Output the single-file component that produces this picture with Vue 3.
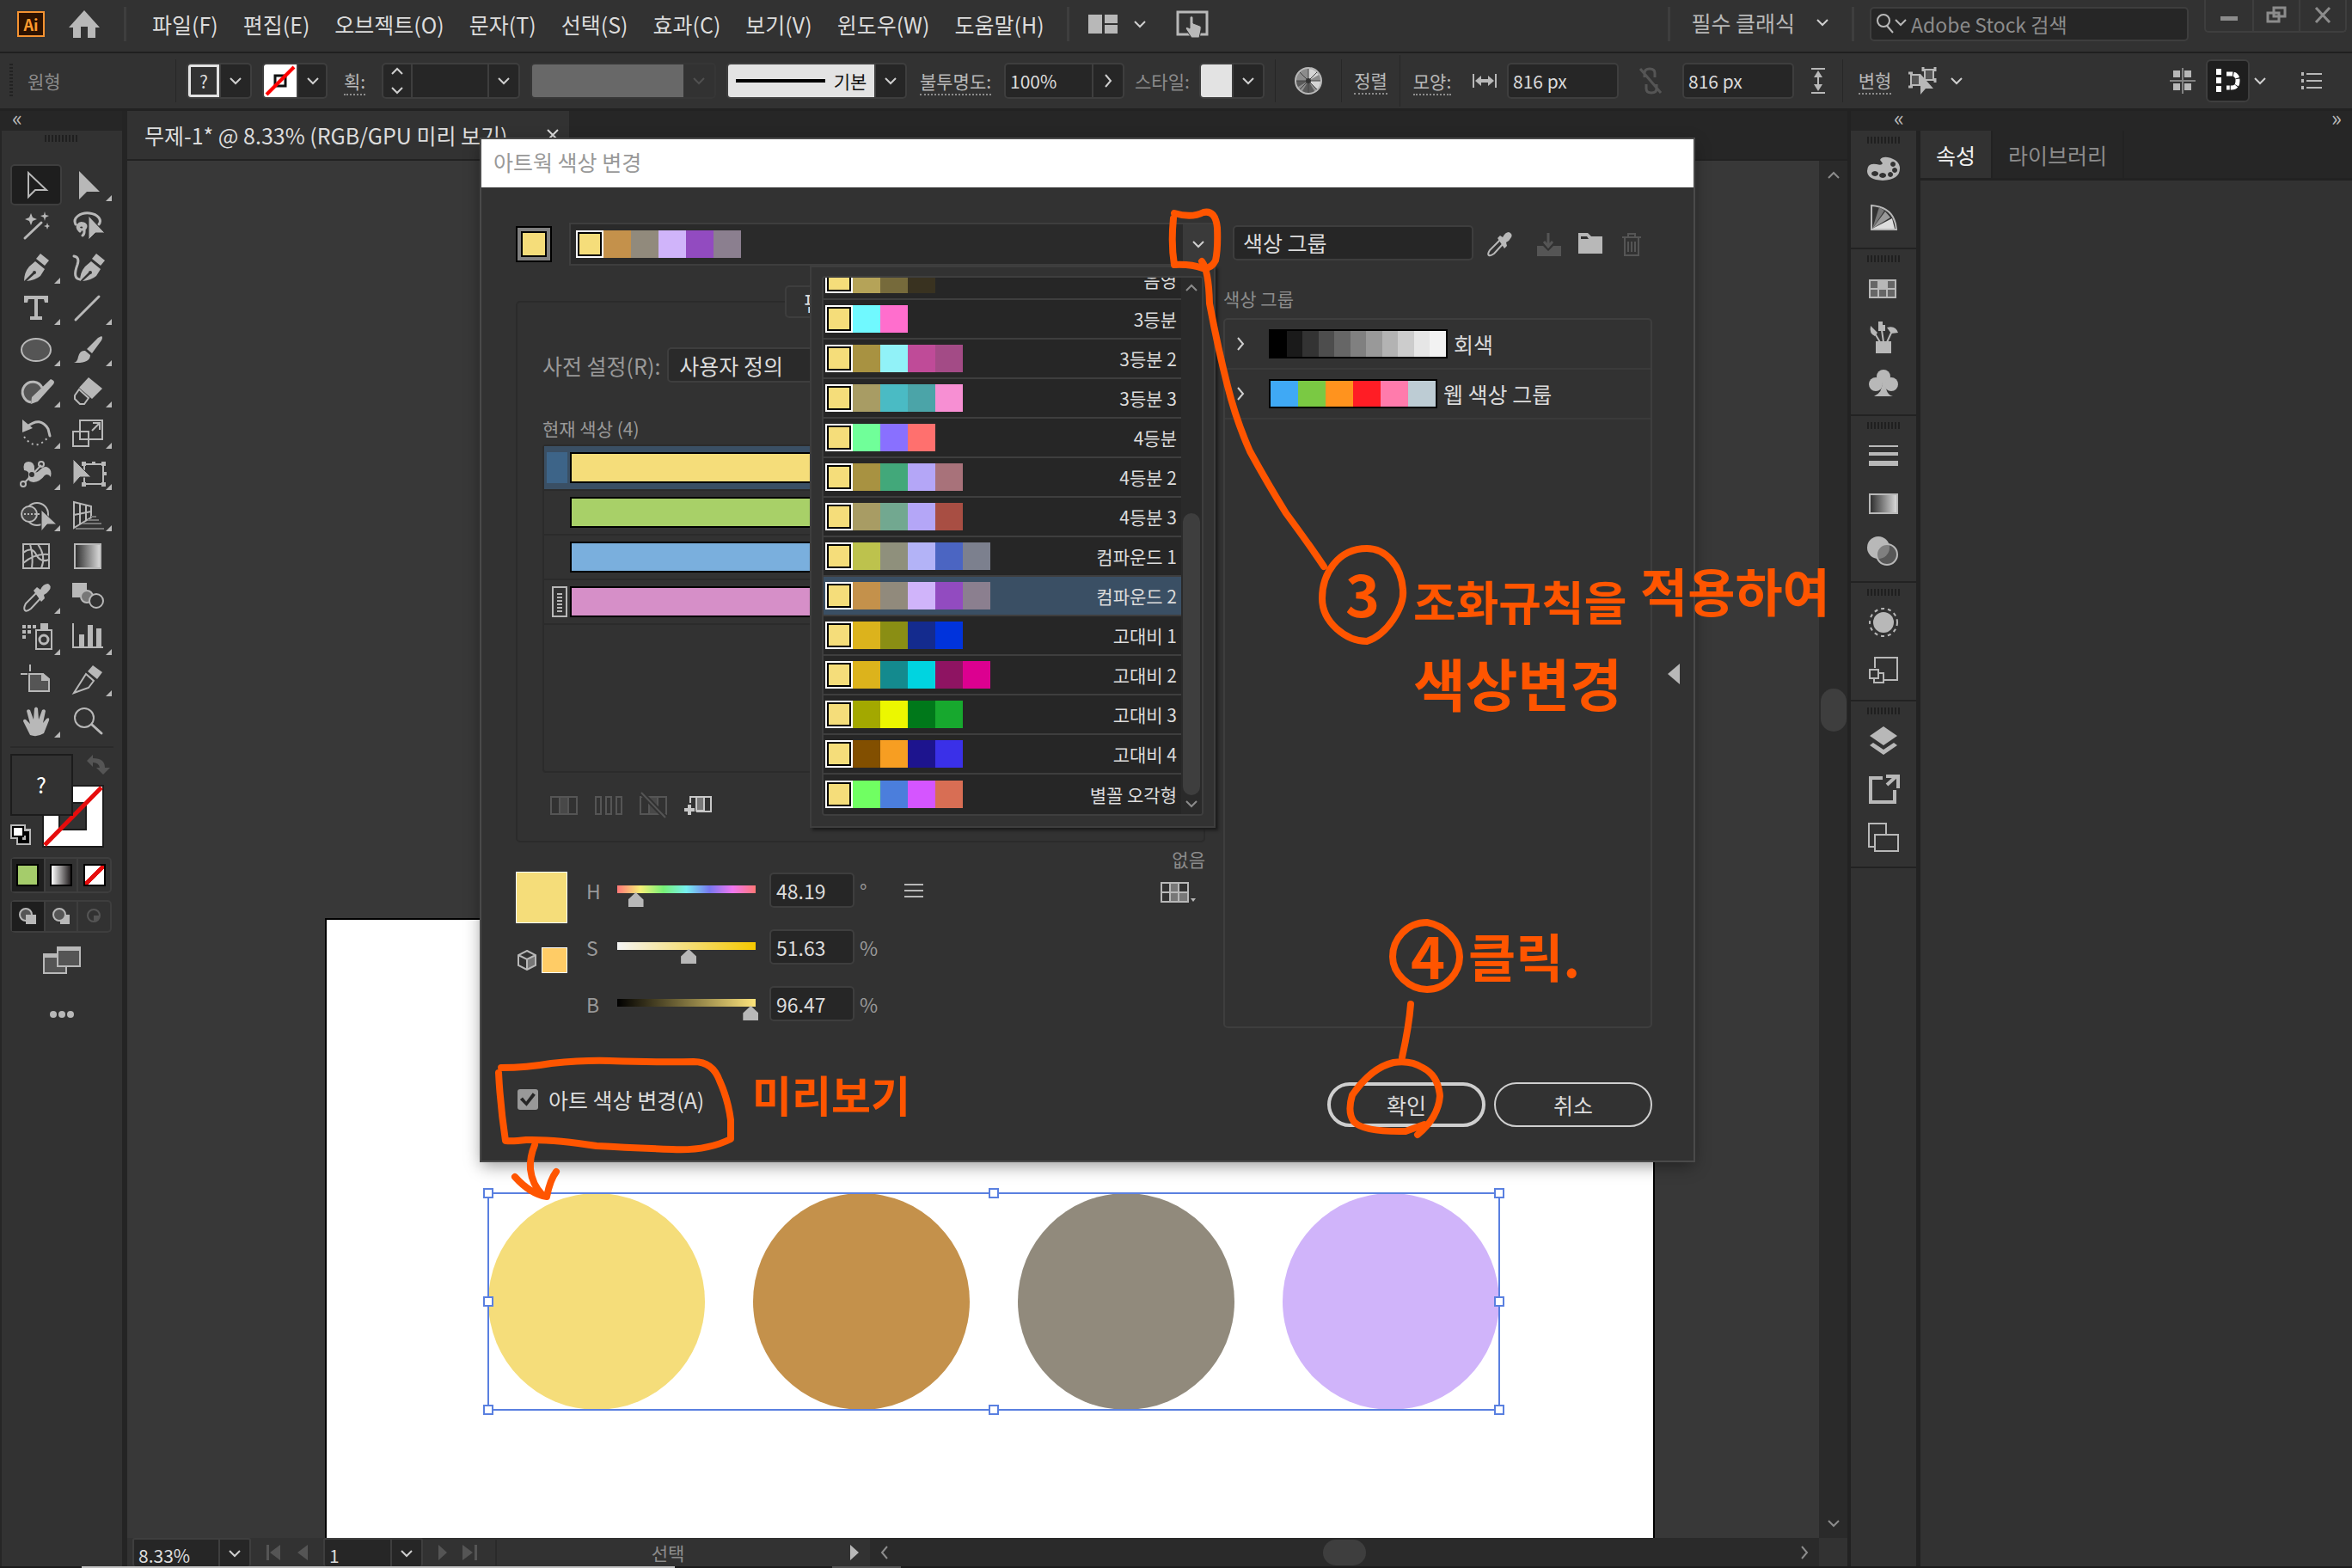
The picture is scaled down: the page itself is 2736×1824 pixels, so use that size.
<template>
  <div class="app">
    <!-- Menu bar -->
    <header class="menubar">
      <span class="logo">Ai</span>
      <button class="home" aria-label="Home">
        <svg viewBox="0 0 36 32"><path d="M18 0 36 20h-5v12h-9V19h-8v13H5V20H0z" /></svg>
      </button>
      <span class="vline"></span>
      <nav class="menus">
        <button v-for="m in menus" :key="m">{{ m }}</button>
      </nav>
      <span class="vline"></span>
      <button class="arrange" aria-label="Arrange">
        <svg viewBox="0 0 34 22" width="34" height="22"><path d="M0 0h16v22H0zM19 0h15v10H19zM19 12h15v10H19z" /></svg>
        <Chevron dir="down" />
      </button>
      <button class="touch" aria-label="Touch">
        <svg viewBox="0 0 38 32" width="38" height="32">
          <path d="M2 2h34v26H2z" fill="none" stroke="currentColor" stroke-width="3" />
          <path d="M16 8q2-3 4 0v7l8 3q2 1 1 5l-2 9h-9l-7-11q1-3 5 0z" stroke="#323232" stroke-width="1" />
        </svg>
      </button>
      <div class="menubar-right">
        <span class="vline"></span>
        <button class="workspace">필수 클래식 <Chevron dir="down" /></button>
        <span class="vline"></span>
        <label class="stock">
          <svg viewBox="0 0 40 28" width="40" height="28" fill="none" stroke="currentColor" stroke-width="2">
            <circle cx="10" cy="10" r="7" /><path d="m14 16 7 8M24 9l6 6 6-6" />
          </svg>
          <input type="text" placeholder="Adobe Stock 검색">
        </label>
        <div class="winbtns">
          <button aria-label="Minimize"><svg viewBox="0 0 24 24"><path d="M2 13h20v5H2z" /></svg></button>
          <button aria-label="Restore">
            <svg viewBox="0 0 24 24" fill="none" stroke="currentColor" stroke-width="3"><path d="M9 3h13v10H9zM2 9h13v10H2z" /></svg>
          </button>
          <button aria-label="Close">
            <svg viewBox="0 0 24 24" fill="none" stroke="currentColor" stroke-width="3"><path d="m4 3 16 17M20 3 4 20" /></svg>
          </button>
        </div>
      </div>
    </header>

    <!-- Control bar -->
    <div class="controlbar">
      <span class="grip-v"></span>
      <span class="objtype">원형</span>
      <span class="vsep"></span>
      <div class="combo w76">
        <button class="fillq">?</button>
        <button class="arr" aria-label="Fill"><Chevron dir="down" /></button>
      </div>
      <div class="combo w76">
        <button class="strokenone" aria-label="None">
          <svg viewBox="0 0 38 38"><path d="M0 0h38v38H0z" fill="#fff" /><path d="M13 13h12v12H13z" fill="#fff" stroke="#111" stroke-width="3" /><path d="M3 35 35 3" stroke="#f00" stroke-width="4" /></svg>
        </button>
        <button class="arr" aria-label="Stroke"><Chevron dir="down" /></button>
      </div>
      <label class="clabel w39" for="strokeWeight"><u>획:</u></label>
      <div class="combo w161">
        <span class="spin"><Chevron dir="up" /><Chevron dir="down" /></span>
        <input id="strokeWeight" type="text">
        <button class="arr" aria-label="Stroke weight"><Chevron dir="down" /></button>
      </div>
      <div class="combo w216 off">
        <span class="greyfill"></span>
        <button class="arr" aria-label="Profile" disabled><Chevron dir="down" /></button>
      </div>
      <div class="combo w210">
        <button class="brush"><span class="brushline"></span>기본</button>
        <button class="arr" aria-label="Brush"><Chevron dir="down" /></button>
      </div>
      <label class="clabel w89" for="opacity"><u>불투명도:</u></label>
      <div class="combo w140">
        <input id="opacity" type="text" value="100%">
        <button class="arr" aria-label="Opacity"><Chevron dir="right" /></button>
      </div>
      <span class="clabel w63 dim">스타일:</span>
      <div class="combo w76">
        <span class="whitefill"></span>
        <button class="arr" aria-label="Style"><Chevron dir="down" /></button>
      </div>
      <span class="vsep"></span>
      <button class="cicon w52" aria-label="Recolor">
        <svg viewBox="0 0 34 34" width="34" height="34">
          <circle cx="17" cy="17" r="15" fill="#8c8c8c" stroke="#b8b8b8" stroke-width="2" />
          <path d="M17 17 17 3A14 14 0 0 1 29 10zM17 17 31 17A14 14 0 0 1 27 27z" fill="#d5d5d5" />
          <path d="M17 17 24 29A14 14 0 0 1 10 29zM17 17 5 24A14 14 0 0 1 3 17z" fill="#5a5a5a" />
          <path d="M17 3v28M3 17h28M7 7l20 20M27 7 7 27" stroke="#444" />
          <circle cx="17" cy="17" r="3" fill="#323232" />
        </svg>
      </button>
      <span class="vsep"></span>
      <button class="clabel w43"><u>정렬</u></button>
      <span class="vsep tall"></span>
      <span class="clabel w50"><u>모양:</u></span>
      <span class="cicon w38 end">
        <svg viewBox="0 0 28 16" width="28" height="16"><path d="M0 0h2v16H0zM26 0h2v16h-2zM3 8l7-6v4h8V2l7 6-7 6v-4h-8v4z" /></svg>
      </span>
      <div class="combo w130"><input type="text" value="816 px" aria-label="Width"></div>
      <span class="cicon w50 faint">
        <svg viewBox="0 0 28 32" width="28" height="32" fill="none" stroke="currentColor" stroke-width="3">
          <path d="M7 12V7q0-5 6-5t6 5v5M9 20v5q0 5 6 5t6-5v-5M2 2l24 28" />
        </svg>
      </span>
      <div class="combo w130"><input type="text" value="816 px" aria-label="Height"></div>
      <span class="cicon w32">
        <svg viewBox="0 0 16 30" width="16" height="30"><path d="M0 0h16v2H0zM0 28h16v2H0zM8 3l5 8H9v8h4l-5 8-5-8h4v-8H3z" /></svg>
      </span>
      <span class="vsep"></span>
      <button class="clabel w50"><u>변형</u></button>
      <button class="cicon w38" aria-label="Isolate">
        <svg viewBox="0 0 34 34" width="34" height="34">
          <path d="M3 10h10v12H3zM19 4h10v12H19z" fill="#555" stroke="currentColor" stroke-width="2" />
          <path d="M0 8h5M0 24h5M17 1v5M31 1v5M31 14v5" stroke="currentColor" stroke-width="3" />
          <path d="M14 9v24l6-7h9z" />
        </svg>
      </button>
      <Chevron dir="down" />
      <div class="controlbar-right">
        <button class="cicon" aria-label="Align grid">
          <svg viewBox="0 0 30 30" width="30" height="30"><path d="M4 3h8v8H4zM17 3h8v8h-8zM4 18h8v8H4zM17 18h8v8h-8z" /><path d="M14 0h2v30h-2zM0 14h30v2H0z" opacity=".6" /></svg>
        </button>
        <button class="cicon snap" aria-label="Snap">
          <svg viewBox="0 0 30 30" width="30" height="30" fill="none" stroke="#fff">
            <path d="M4 1v28" stroke-width="6" stroke-dasharray="7 3" /><path d="M13 7h6q7 0 7 8t-7 8h-6" stroke-width="5" stroke-dasharray="7 1" />
          </svg>
        </button>
        <Chevron dir="down" />
        <button class="cicon list" aria-label="Options">
          <svg viewBox="0 0 24 20" width="24" height="20"><path d="M0 0h3v4H0zM0 8h3v4H0zM0 16h3v4H0zM6 1h18v2H6zM6 9h18v2H6zM6 17h18v2H6z" /></svg>
        </button>
      </div>
    </div>

    <div class="body">
      <!-- Tools -->
      <aside class="toolbar">
        <div class="dockhead">«</div>
        <span class="grip"></span>
        <div class="tools">
          <button v-for="(t, i) in tools" :key="t.name" class="tool" :class="{ active: i === 0 }" :aria-label="t.name">
            <svg viewBox="0 0 36 36" width="36" height="36" v-html="t.svg"></svg>
            <i v-if="t.more" class="corner"></i>
          </button>
        </div>
        <div class="paint">
          <svg viewBox="0 0 120 112" width="120" height="112">
            <path d="M38 37h70v71H38z" fill="#fff" stroke="#1c1c1c" stroke-width="2" />
            <path d="M57 57h31v31H57z" fill="#323232" stroke="#1c1c1c" stroke-width="2" />
            <path d="M40 106 106 39" stroke="#e60c0c" stroke-width="5" />
            <path d="M1 1h71v70H1z" fill="#323232" stroke="#1c1c1c" stroke-width="2" />
            <path d="m89 8 7-7v4q14 0 14 11h6l-8 8-8-8h4q-1-6-8-6v5z" fill="#555" />
            <path d="M0 82h18v5h6v19H7v-7H0z" fill="#b8b8b8" />
            <path d="M2 84h14v13H2zM9 90h13v14H9z" />
            <path d="M9 90h13v14H9z" fill="#000" />
            <path d="M14 95h4v5h-4z" fill="#b8b8b8" />
            <path d="M3 85h12v11H3z" fill="#fff" stroke="#000" stroke-width="2" />
          </svg>
          <span class="paintq">?</span>
        </div>
        <div class="trio">
          <button class="on" aria-label="Color"><span class="sw green"></span></button>
          <button aria-label="Gradient"><span class="sw grad"></span></button>
          <button aria-label="None"><span class="sw none"></span></button>
        </div>
        <div class="trio modes">
          <button class="on" aria-label="Draw normal">
            <svg viewBox="0 0 22 22"><circle cx="9" cy="9" r="7" fill="#555" stroke="currentColor" stroke-width="2" /><path d="M9 9h12v11H9z" /></svg>
          </button>
          <button aria-label="Draw behind">
            <svg viewBox="0 0 22 22"><path d="M10 9h11v11H10z" /><circle cx="9" cy="9" r="7" fill="#555" stroke="currentColor" stroke-width="2" /></svg>
          </button>
          <button class="dimmed" aria-label="Draw inside">
            <svg viewBox="0 0 22 22"><circle cx="10" cy="10" r="7" fill="none" stroke="currentColor" stroke-width="2" /><path d="M10 10h7q-1 6-7 6z" /></svg>
          </button>
        </div>
        <button class="screenmode" aria-label="Screen mode">
          <svg viewBox="0 0 44 32" width="44" height="32">
            <path d="M1 9h26v22H1z" fill="#555" stroke="#b8b8b8" stroke-width="2" /><path d="M1 8h16v5H1z" />
            <path d="M17 1h26v22H17z" fill="#555" stroke="#b8b8b8" stroke-width="2" /><path d="M17 1h26v4H17z" />
          </svg>
        </button>
        <button class="dots" aria-label="More tools">
          <svg viewBox="0 0 28 8" width="28" height="8"><circle cx="4" cy="4" r="4" /><circle cx="14" cy="4" r="4" /><circle cx="24" cy="4" r="4" /></svg>
        </button>
      </aside>

      <!-- Document -->
      <main class="doc">
        <div class="tabs">
          <div class="tab">무제-1* @ 8.33% (RGB/GPU 미리 보기)
            <button aria-label="Close tab">
              <svg viewBox="0 0 14 14" width="14" height="14" fill="none" stroke="#dcdcdc" stroke-width="2"><path d="m1 1 12 12M13 1 1 13" /></svg>
            </button>
          </div>
        </div>
        <div class="viewport">
          <div class="stage">
            <div class="artboard">
              <div class="selection">
                <span v-for="c in circles" :key="c" class="circle" :style="{ background: c }"></span>
                <i v-for="p in handles" :key="p" class="handle" :class="p"></i>
              </div>
            </div>
          </div>
          <div class="vscroll"><Chevron dir="up" /><span class="thumb"></span><Chevron dir="down" /></div>
        </div>
        <div class="status">
          <div class="combo zoom"><input type="text" value="8.33%" aria-label="Zoom"><button class="arr" aria-label="Zoom list"><Chevron dir="down" /></button></div>
          <span class="nav"><svg viewBox="0 0 50 18" width="50" height="18"><path d="M0 0h3v18H0zM16 0v18L4 9zM48 0v18L36 9z" /></svg></span>
          <div class="combo page"><input type="text" value="1" aria-label="Artboard"><button class="arr" aria-label="Artboard list"><Chevron dir="down" /></button></div>
          <span class="nav"><svg viewBox="0 0 46 18" width="46" height="18"><path d="M0 0v18l10-9zM28 0v18l12-9zM42 0h3v18h-3z" /></svg></span>
          <span class="mode">선택</span>
          <button class="play" aria-label="Status"><svg viewBox="0 0 10 18" width="10" height="18"><path d="M0 0v18l10-9z" /></svg></button>
          <div class="hscroll"><Chevron dir="left" /><span class="thumb"></span><Chevron dir="right" /></div>
        </div>
      </main>

      <!-- Docked panels -->
      <aside class="dock">
        <div class="dockhead split"><span>«</span><span>»</span></div>
        <div class="dockcols">
          <div class="iconcol">
            <div v-for="(g, i) in panels" :key="i" class="pgroup">
              <span class="grip"></span>
              <button v-for="(p, j) in g" :key="j" :aria-label="p.name">
                <svg viewBox="0 0 38 38" width="38" height="38" v-html="p.svg"></svg>
              </button>
            </div>
          </div>
          <div class="props">
            <div class="ptabs"><button class="on">속성</button><button>라이브러리</button></div>
          </div>
        </div>
      </aside>
    </div>
    <div class="taskline"><span class="light"></span><span class="mid"></span></div>

    <!-- Recolor Artwork dialog -->
    <section class="dialog" role="dialog" aria-labelledby="dlgTitle">
      <h1 id="dlgTitle">아트웍 색상 변경</h1>
      <div class="dlg-cols">
        <div class="dlg-main">
          <div class="harmony">
            <button class="base" aria-label="Base color"></button>
            <div class="hcombo">
              <Swatches :colors="rules[8].colors" />
              <button class="harr" aria-label="Harmony rules"><Chevron dir="down" /></button>
              <div class="popup">
                <div class="plist">
                  <ul>
                    <li v-for="r in rules" :key="r.name" :class="{ sel: r.name === selected }" @click="selected = r.name">
                      <Swatches :colors="r.colors" />
                      <span>{{ r.name }}</span>
                    </li>
                  </ul>
                  <div class="pscroll"><Chevron dir="up" /><span class="thumb"></span><Chevron dir="down" /></div>
                </div>
              </div>
            </div>
          </div>

          <div class="assign">
            <button class="edit">편집</button>
            <div class="preset">
              <label for="preset">사전 설정(R):</label>
              <select id="preset"><option>사용자 정의</option></select>
            </div>
            <p class="cur">현재 색상 (4)</p>
            <div class="rows">
              <div v-for="(c, i) in current" :key="c" class="row" :class="{ on: i === 0 }">
                <span class="mark">
                  <svg v-if="i === 3" viewBox="0 0 18 36" width="18" height="36">
                    <path d="M1 1h16v34H1z" fill="none" stroke="#b8b8b8" stroke-width="2" />
                    <path d="M6 9h6M6 13h6M6 17h6M6 21h6M6 25h6M6 29h6" stroke="#b8b8b8" stroke-width="2" />
                  </svg>
                </span>
                <span class="bar" :style="{ background: c }"></span>
              </div>
            </div>
            <div class="rowtools">
              <button disabled aria-label="Merge"><svg viewBox="0 0 32 22"><path d="M11 1h10v20H11z" fill="#484848" /><path d="M1 1h30v20H1z" /></svg></button>
              <button disabled aria-label="Separate"><svg viewBox="0 0 32 22"><path d="M1 1h6v20H1zM13 1h6v20h-6zM25 1h6v20h-6z" /></svg></button>
              <button disabled aria-label="Exclude"><svg viewBox="0 0 32 22"><path d="M11 1h10v20H11z" fill="#484848" /><path d="M1 1h30v20H1z" /><path d="m2-4 28 29" stroke="#323232" stroke-width="6" /><path d="m2-4 28 29" /></svg></button>
              <button class="bright" aria-label="New row"><svg viewBox="0 0 32 22"><path d="M14 1h9v16h-9z" fill="#777" /><path d="M7 8V1h24v17H14" /><path d="M0 16h12M6 10v12" stroke-width="4" /></svg></button>
            </div>
          </div>

          <div class="hsb">
            <div class="chips">
              <span class="chip"></span>
              <div class="gamut">
                <svg viewBox="0 0 22 24" width="22" height="24">
                  <path d="M11 1 21 6v12l-10 5L1 18V6z" fill="#323232" /><path d="m11 11 10-5v12l-10 5z" fill="#777" />
                  <path d="M11 1 21 6v12l-10 5L1 18V6zM1 6l10 5 10-5M11 11v12" fill="none" stroke="#b8b8b8" stroke-width="2" />
                </svg>
                <span class="minichip"></span>
              </div>
            </div>
            <div class="channels">
              <div v-for="s in hsb" :key="s.k" class="channel">
                <label :for="'ch' + s.k">{{ s.k }}</label>
                <input :id="'ch' + s.k" v-model="s.v" type="range" min="0" :max="s.max" step="0.01" :class="'track' + s.k">
                <input v-model="s.v" class="num" type="text" :aria-label="s.k">
                <span class="unit">{{ s.unit }}</span>
              </div>
            </div>
            <button class="burger" aria-label="Color mode">
              <svg viewBox="0 0 22 16" width="22" height="16"><path d="M0 0h22v2H0zM0 7h22v2H0zM0 14h22v2H0z" /></svg>
            </button>
            <div class="limit">
              <span>없음</span>
              <button aria-label="Swatch library">
                <svg viewBox="0 0 42 24" width="42" height="24">
                  <path d="M11 1h10v11H11zM21 12h11v11H21zM11 12h10v11H11z" fill="#777" />
                  <path d="M1 1h31v22H1zM11 1v22M21 1v22M1 12h31" fill="none" stroke="#b8b8b8" stroke-width="2" /><path d="M35 19h6l-3 4z" />
                </svg>
              </button>
            </div>
          </div>
        </div>

        <div class="dlg-side">
          <div class="gname">
            <input type="text" value="색상 그룹" aria-label="Group name">
            <button aria-label="Get colors"><svg viewBox="0 0 30 30"><path d="M16 10 4 22q-3 5-1 6t6-2l11-12" fill="none" stroke="currentColor" stroke-width="2" /><path d="m13 8 3-3 3 2q3-6 7-6 5 2 3 6-2 4-6 6l1 4-3 3z" /></svg></button>
            <button disabled aria-label="Save"><svg viewBox="0 0 30 30"><path d="M1 17h7l6 6 6-6h9v12H1z" /><path d="M14 2v14M9 12l5 6 5-6" fill="none" stroke="currentColor" stroke-width="3" /></svg></button>
            <button aria-label="New group"><svg viewBox="0 0 30 30"><path d="M1 2h11l4 4h13v20H1z" /><path d="M4 6h7l2 3H4z" fill="#323232" /></svg></button>
            <button disabled aria-label="Delete"><svg viewBox="0 0 30 30" fill="none" stroke="currentColor" stroke-width="2"><path d="M4 7h22M7 7v21h16V7M11 6V3h8v3M11 12v12M15 12v12M19 12v12" /></svg></button>
          </div>
          <p class="glabel">색상 그룹</p>
          <div class="groups">
            <div v-for="g in groups" :key="g.name" class="group">
              <Chevron dir="right" />
              <span class="strip" :style="{ width: g.w + 'px' }"><i v-for="c in g.colors" :key="c" :style="{ background: c }"></i></span>
              {{ g.name }}
            </div>
          </div>
        </div>
      </div>
      <div class="foot">
        <label class="recolor"><input type="checkbox" checked> 아트 색상 변경(A)</label>
        <button class="ok">확인</button>
        <button>취소</button>
      </div>
      <button class="collapse" aria-label="Collapse"><svg viewBox="0 0 14 24" width="14" height="24"><path d="M14 0v24L0 12z" /></svg></button>

      <!-- Pen notes over the dialog -->
      <svg class="notes" viewBox="560 162 1410 1190" width="1410" height="1190">
        <g fill="none" stroke="#ff5500" stroke-width="8" stroke-linecap="round" stroke-linejoin="round">
          <path d="M1366 248q20 6 34-1 14-3 16 18 1 24-2 38-5 10-15 9-14-5-33-4-4-24-1-54" />
          <path d="M1398 304q8 10 9 49 10 53 21 96 10 40 26 76 22 40 42 72 28 38 44 62" />
          <path d="M1590 638c-34 0-52 30-52 58s28 50 52 50c24-8 44-40 42-60-2-28-20-48-42-48z" />
          <path d="M1660 1073c-24 0-40 20-40 40s20 38 40 38c22 0 38-20 38-38s-16-36-38-40z" />
          <path d="M1641 1168q-2 26-10 62" />
          <path d="M1649 1320q24-20 26-45-2-24-20-33-14-9-34-6-26 6-48 38-6 20 2 31 12 12 60 11l22-8" />
          <path d="M583 1242q30 0 58-5 40-4 68-3 60 2 98 1 22 0 30 22 10 22 13 46 0 12 0 22-28 14-68 12-50-2-88-4-50-8-82-7-16 2-24 1-6-40-8-79" />
          <path d="M622 1332q-6 14-5 28 2 18 14 30M599 1369q18 20 37 23 4-20 11-29" />
        </g>
        <g class="pen">
          <text x="1565" y="718" font-size="68">3</text>
          <text x="1644" y="722" font-size="54">조화규칙을</text>
          <text x="1908" y="712" font-size="60">적용하여</text>
          <text x="1644" y="822" font-size="66">색상변경</text>
          <text x="1641" y="1139" font-size="68">4</text>
          <text x="1708" y="1137" font-size="60">클릭.</text>
          <text x="875" y="1294" font-size="50">미리보기</text>
        </g>
      </svg>
    </section>
  </div>
</template>

<script setup>
import { ref, h } from 'vue'

const arrows = {
  down: 'M2 5l6 6 6-6',
  up: 'M2 11l6-6 6 6',
  right: 'M5 1l6 7-6 7',
  left: 'M11 1L5 8l6 7'
}
const Chevron = (props) =>
  h('svg', { class: 'chev', viewBox: '0 0 16 16', width: 16, height: 16 }, [h('path', { d: arrows[props.dir] })])
Chevron.props = ['dir']

// first swatch is always the base color
const Swatches = (props) =>
  h('span', { class: 'swatches' }, props.colors.map((c) => h('i', { style: { background: c } })))
Swatches.props = ['colors']

const menus = ['파일(F)', '편집(E)', '오브젝트(O)', '문자(T)', '선택(S)', '효과(C)', '보기(V)', '윈도우(W)', '도움말(H)']

const Y = '#f5dd7a'
const selected = ref('컴파운드 2')
const rules = [
  { name: '음영', colors: [Y, '#b5a358', '#766a3b', '#393220'] },
  { name: '3등분', colors: [Y, '#70f9ff', '#ff6ecd'] },
  { name: '3등분 2', colors: [Y, '#a89241', '#91f2f8', '#bf4b98', '#a34b86'] },
  { name: '3등분 3', colors: [Y, '#a89c64', '#4abbc4', '#4ba4a8', '#f78fd3'] },
  { name: '4등분', colors: [Y, '#70ff99', '#8970ff', '#ff706e'] },
  { name: '4등분 2', colors: [Y, '#a89241', '#42a87a', '#b4a6f7', '#a8727a'] },
  { name: '4등분 3', colors: [Y, '#a89c64', '#72a890', '#b4a6f7', '#a84e43'] },
  { name: '컴파운드 1', colors: [Y, '#bdc24d', '#8f907c', '#b3b3f7', '#4b65c2', '#7c808e'] },
  { name: '컴파운드 2', colors: [Y, '#c4914b', '#918a7c', '#d0b4fa', '#924bc0', '#8b7f8f'] },
  { name: '고대비 1', colors: [Y, '#dcb31c', '#8a8e14', '#142b8e', '#0033dc'] },
  { name: '고대비 2', colors: [Y, '#dcb31c', '#148a8e', '#00d4e0', '#8e1462', '#dc0090'] },
  { name: '고대비 3', colors: [Y, '#a3a800', '#ecf700', '#00781a', '#17a82e'] },
  { name: '고대비 4', colors: [Y, '#824f00', '#f79e22', '#1d148e', '#3a30e8'] },
  { name: '별꼴 오각형', colors: [Y, '#70ff62', '#4b7edc', '#d555ff', '#d86e54'] }
]
const current = ['#f5dd7a', '#a8d068', '#7aafdd', '#d68fc8']
const circles = ['#f5dd7a', '#c4914b', '#918a7c', '#d0b4fa']
const handles = ['tl', 'tc', 'tr', 'ml', 'mr', 'bl', 'bc', 'br']

const hsb = ref([
  { k: 'H', v: '48.19', max: 360, unit: '°' },
  { k: 'S', v: '51.63', max: 100, unit: '%' },
  { k: 'B', v: '96.47', max: 100, unit: '%' }
])

const groups = [
  { name: '회색', w: 208, colors: ['#000', '#1a1a1a', '#333', '#4d4d4d', '#666', '#808080', '#999', '#b3b3b3', '#ccc', '#e6e6e6', '#f2f2f2'] },
  { name: '웹 색상 그룹', w: 196, colors: ['#3fa9f5', '#7ac943', '#ff931e', '#ff1d25', '#ff7bac', '#bdccd4'] }
]

// s = outline drawn in the icon color
const s = 'fill="none" stroke="currentColor" stroke-width="2"'
const bold = 'fill="none" stroke="currentColor" stroke-width="3" stroke-linecap="round"'
const nib = 'M4 34q0-10 6-17l7-6 11 9-5 8q-6 5-16 6l9-8a2 2 0 1 0-2-2z'
const tools = [
  { name: 'Selection', svg: `<path ${s} d="M9 4v28l8-8h13z"/>` },
  { name: 'Direct Selection', more: 1, svg: '<path d="M8 2v33l9-9h15z"/>' },
  { name: 'Magic Wand', svg: `<path ${bold} d="M5 32 24 14"/><path d="m12 3 2 5 5 2-5 2-2 5-2-5-5-2 5-2zM28 1l1 4 4 1-4 2-1 4-1-4-4-2 4-1zM31 14l1 3 2 1-2 1-1 3-1-3-3-1 3-1z"/>` },
  { name: 'Lasso', svg: `<path ${bold} d="M4 16C0 8 10 2 20 3s15 8 11 13M12 29c3-2 3-12-1-12s-5 5 0 5 7-5 2-7-10 4-4 9"/><path stroke="#323232" d="M19 6v28l8-8h11z"/>` },
  { name: 'Pen', more: 1, svg: `<path d="${nib}"/><path d="m18 8 5-6 10 8-5 6z"/>` },
  { name: 'Curvature', svg: `<path ${bold} d="M2 5q7 1 4 10-6 16 3 17"/><g transform="translate(5)"><path d="${nib}"/><path d="m18 8 5-6 10 8-5 6z"/></g>` },
  { name: 'Type', more: 1, svg: '<path d="M4 3h28v8h-4l-1-4h-7v20h5v4H11v-4h5V7H9l-1 4H4z"/>' },
  { name: 'Line', more: 1, svg: `<path ${bold} d="M4 31 31 4"/>` },
  { name: 'Ellipse', more: 1, svg: '<ellipse cx="18" cy="18" rx="17" ry="13" fill="#555" stroke="currentColor" stroke-width="2"/>' },
  { name: 'Paintbrush', more: 1, svg: '<path d="M34 2q2 1 0 5L23 22l-6-5L30 4zM15 19l6 5q0 10-19 9 4-1 5-7 2-8 8-7z"/>' },
  { name: 'Shaper', more: 1, svg: `<path d="M12 31A12 12 0 1 1 25 14" fill="#555" stroke="currentColor" stroke-width="3"/><path d="m35 4q6 2 3 6L20 30l-8 3 1-8z"/>` },
  { name: 'Eraser', more: 1, svg: `<path d="M19 2 35 15 23 27 8 14z"/><path ${s} d="m8 16 11 10-5 7H9l-6-6v-4z"/>` },
  { name: 'Rotate', more: 1, svg: `<path ${bold} d="M8 11q15-12 24 3l2 8"/><path d="M2 3v15l12-5z"/><path ${s} stroke-dasharray="2 4" d="M4 23q14 19 29-1"/>` },
  { name: 'Scale', more: 1, svg: `<path ${s} d="M9 4h26v22H9zM1 17h18v17H1zM23 16l9-9M24 7h8v8"/>` },
  { name: 'Width', more: 1, svg: `<path d="M4 14Q2 4 9 4t7 8q0 8 6 2t10-3q5 3 3 11-3-5-7-2-5 7-13 8-8-1-6-7T4 14z"/><path ${s} d="M5 28 24 8"/><circle ${s} cx="3" cy="30" r="3"/><circle ${s} cx="24" cy="7" r="3"/><circle cx="13" cy="19" r="3" fill="#323232"/>` },
  { name: 'Free Transform', more: 1, svg: `<path ${s} d="M14 7h22v23H14z"/><path d="M11 4h5v5h-5zM34 4h5v5h-5zM34 28h5v5h-5zM11 28h5v5h-5zM23 4h4v4h-4zM36 16h4v4h-4z"/><path stroke="#323232" d="M1 1v30l8-9h13z"/>` },
  { name: 'Shape Builder', more: 1, svg: `<circle cx="19" cy="17" r="13" ${s}/><circle cx="10" cy="17" r="9" fill="#444" stroke="currentColor" stroke-width="2"/><path ${s} stroke-dasharray="2 2" d="M4 17h20"/><path stroke="#323232" d="M24 12v25l7-8h11z"/>` },
  { name: 'Perspective Grid', more: 1, svg: `<path ${s} d="M2 3v30l20-12V8zM9 5v24M16 7v18M2 18l20-4"/><path stroke="#777" stroke-width="2" d="M22 20h6M18 24h13M12 28h22M4 34h33"/>` },
  { name: 'Mesh', svg: `<path ${s} d="M3 4h30v28H3zM3 14q10-8 15 2t15 6M13 32q2-14-2-28M24 32q6-14-4-28M3 26q14-12 30-10"/>` },
  { name: 'Gradient', svg: '<defs><linearGradient id="tg"><stop stop-color="#2a2a2a"/><stop offset="1" stop-color="#ddd"/></linearGradient></defs><path d="M3 4h30v28H3z" fill="url(#tg)" stroke="currentColor" stroke-width="2"/>' },
  { name: 'Eyedropper', more: 1, svg: `<path ${s} d="M19 12 6 25q-3 6-1 8t7-2l13-14"/><path d="m15 10 4-4 4 3q3-7 9-7 5 3 1 8-3 4-6 5l1 4-4 4z"/>` },
  { name: 'Blend', svg: '<path d="M0 1h17v17H0z"/><circle cx="17" cy="17" r="7" fill="#777" stroke="#b8b8b8" stroke-width="2"/><circle cx="28" cy="22" r="8" fill="#323232" stroke="currentColor" stroke-width="2"/>' },
  { name: 'Symbol Sprayer', more: 1, svg: `<path d="M2 2h4v4H2zM8 2h4v4H8zM14 2h4v4h-4zM2 8h4v4H2zM8 8h4v4H8zM2 14h4v4H2zM23 0h9v7h-9z"/><path ${s} d="M18 8h18v22H18z"/><circle cx="27" cy="19" r="5" fill="none" stroke="currentColor" stroke-width="3"/>` },
  { name: 'Graph', more: 1, svg: `<path ${s} d="M1 0v28h35"/><path d="M8 13h6v14H8zM18 2h6v25h-6zM28 6h6v21h-6z"/>` },
  { name: 'Artboard', svg: '<path d="M10 11h16l7 6v14H10z" fill="#555" stroke="currentColor" stroke-width="2"/><path d="M24 10h2l8 7v2H24zM0 10h8v2H0zM10 0h2v8h-2z"/>' },
  { name: 'Slice', more: 1, svg: `<path ${s} d="M2 33 16 11l9 8-6 8z"/><path d="m18 8 6-7 11 8-6 8z"/>` },
  { name: 'Hand', more: 1, svg: '<path d="M11 34 3 18q0-3 3-2l5 5L7 6q1-3 4-1l4 11 1-13q2-3 4 0l1 13 4-11q3-2 4 1l-3 14 4-5q4-2 3 2l-6 15q-8 5-16 2z"/>' },
  { name: 'Zoom', svg: `<circle ${s} cx="14" cy="14" r="11"/><path ${bold} d="m23 22 11 10"/>` }
]

const panels = [
  [
    { name: 'Color', svg: '<path fill-rule="evenodd" d="M15 7q2-4 9-3 14 3 14 13 0 13-20 14Q0 30 0 20t11-8q6 2 7-1zM9 20a4 3 0 1 0 .1 0zM18 22a4 3 0 1 0 .1 0zM27 21a3 3 0 1 0 .1 0zM32 16a3 3 0 1 0 .1 0zM30 9a3 3 0 1 0 .1 0z"/>' },
    { name: 'Color Guide', svg: `<path ${s} d="M5 4v28h29Q32 6 5 4z"/><path d="M6 31 14 6l6 4z" fill="#777"/><path d="m6 31 15-20 6 7z" fill="#999"/><path d="m6 31 23-12 3 12z" fill="#ddd"/>` }
  ],
  [
    { name: 'Swatches', svg: '<path d="M2 8h32v22H2z"/><path fill="#666" d="M4 10h8v8H4zM24 10h8v8h-8zM4 20h8v8H4zM14 20h8v8h-8zM24 20h8v8h-8z"/>' },
    { name: 'Brushes', svg: `<path d="M10 24h18v14H10zM4 6l8 8-3 4q-7-3-5-12zM13 1h5v4h3v7h-8zM23 8q10-3 13 6l-8 1z"/><path ${s} d="m9 15 6 10M17 11l2 14M29 12l-6 13"/>` },
    { name: 'Symbols', svg: '<circle cx="19" cy="9" r="8"/><circle cx="10" cy="18" r="8"/><circle cx="28" cy="18" r="8"/><path d="M18 14h3q0 16 9 18H8q10-4 10-18z"/>' }
  ],
  [
    { name: 'Stroke', svg: '<path d="M2 7h34v2H2zM2 15h34v4H2zM2 25h34v6H2z"/>' },
    { name: 'Gradient', svg: '<path d="M3 8h32v22H3z" fill="url(#tg)" stroke="currentColor" stroke-width="2"/>' },
    { name: 'Transparency', svg: '<circle cx="13" cy="14" r="13"/><circle cx="23" cy="22" r="12" fill="#666" fill-opacity=".7" stroke="currentColor" stroke-width="2"/>' }
  ],
  [
    { name: 'Appearance', svg: `<circle cx="19" cy="19" r="12"/><circle cx="19" cy="19" r="16" ${s} stroke-dasharray="4 4"/>` },
    { name: 'Graphic Styles', svg: `<path ${s} d="M9 16V4h26v26H19M3 18h10v10H3zM8 28v5h11V22h-6"/>` }
  ],
  [
    { name: 'Layers', svg: '<path d="m19 2 16 11-16 11L3 13zM3 24l4-3 12 8 12-8 4 3-16 11z"/>' },
    { name: 'Asset Export', svg: '<path fill="none" stroke="currentColor" stroke-width="4" d="M18 6H4v28h28V20M23 14 34 4M22 4h14v14"/>' },
    { name: 'Artboards', svg: `<path ${s} d="M9 30H2V3h20v12M9 16h27v19H9z"/>` }
  ]
]
</script>

<style>
body {
  margin: 0;
  background: #323232;
}
</style>

<style scoped>
* {
  box-sizing: border-box;
}

.app {
  position: relative;
  display: flex;
  flex-direction: column;
  min-height: 100vh;
  overflow: hidden;
  background: #323232;
  color: #dcdcdc;
  font-family: "Noto Sans CJK KR", sans-serif;
  font-size: 25px;
  line-height: 30px;
}

button,
input,
select {
  margin: 0;
  padding: 0;
  border: 0;
  border-radius: 0;
  outline: none;
  background: transparent;
  color: inherit;
  font: inherit;
}

button {
  display: inline-flex;
  align-items: center;
  justify-content: center;
}

svg {
  display: block;
  flex: none;
  fill: currentColor;
  color: #b8b8b8;
}

svg[fill="none"] {
  fill: none;
}

.chev {
  fill: none;
  stroke: #cfcfcf;
  stroke-width: 2;
}

/* menu bar */
.menubar {
  display: flex;
  align-items: center;
  height: 62px;
  padding-left: 20px;
  padding-bottom: 4px;
  border-bottom: 2px solid #1f1f1f;
}

.logo {
  width: 32px;
  height: 30px;
  border: 2px solid #f59331;
  background: #2d1200;
  color: #ff9a2e;
  font-size: 18px;
  font-weight: bold;
  line-height: 26px;
  text-align: center;
}

.home {
  margin: 0 28px;
}

.home svg {
  width: 36px;
  height: 32px;
}

.vline {
  width: 3px;
  height: 40px;
  background: #3e3e3e;
}

.menus {
  display: flex;
  gap: 29px;
  margin: 0 26px 0 30px;
  white-space: nowrap;
}

.arrange {
  gap: 18px;
  margin-left: 22px;
}

.touch {
  margin-left: 34px;
}

.menubar-right {
  display: flex;
  align-items: center;
  align-self: stretch;
  margin-left: auto;
  padding-right: 6px;
}

.workspace {
  gap: 24px;
  margin: 0 26px 4px 24px;
  color: #b8b8b8;
}

.stock {
  display: flex;
  align-items: center;
  width: 371px;
  height: 40px;
  margin: 0 18px 0 18px;
  padding-left: 4px;
  border: 2px solid #3e3e3e;
  border-radius: 5px;
  background: #262626;
}

.stock input {
  width: 300px;
  margin-left: 2px;
  font-size: 23px;
}

.stock input::placeholder {
  color: #8c8c8c;
}

.winbtns {
  display: flex;
  align-self: flex-start;
  border: 2px solid #3e3e3e;
  border-top: 0;
  border-radius: 0 0 5px 5px;
}

.winbtns button {
  width: 54px;
  height: 36px;
}

.winbtns button + button {
  border-left: 2px solid #3e3e3e;
}

.winbtns svg {
  width: 24px;
  height: 24px;
  color: #8c8c8c;
}

/* control bar */
.controlbar {
  display: flex;
  align-items: center;
  gap: 12px;
  height: 67px;
  padding: 0 35px 0 11px;
  border-bottom: 3px solid #222;
  font-size: 21px;
  white-space: nowrap;
}

.grip-v {
  flex: none;
  width: 4px;
  height: 40px;
  background: repeating-linear-gradient(#222 0 2px, transparent 2px 4px);
}

.objtype {
  flex: none;
  width: 165px;
  padding-left: 5px;
  color: #8c8c8c;
}

.vsep {
  flex: none;
  width: 1px;
  height: 50px;
  background: #272727;
}

.vsep.tall {
  height: 60px;
}

.combo {
  display: flex;
  flex: none;
  height: 42px;
  border: 2px solid #3e3e3e;
  border-radius: 5px;
  background: #262626;
  overflow: hidden;
}

.combo input {
  flex: 1;
  min-width: 0;
  padding-left: 5px;
}

.arr {
  flex: none;
  width: 36px;
  border-left: 2px solid #3e3e3e;
}

.w32 { width: 32px; }
.w38 { width: 38px; }
.w39 { width: 39px; }
.w43 { width: 43px; }
.w50 { width: 50px; }
.w52 { width: 52px; }
.w63 { width: 63px; }
.w76 { width: 76px; }
.w89 { width: 89px; }
.w130 { width: 130px; }
.w140 { width: 140px; }
.w161 { width: 161px; }
.w210 { width: 210px; }
.w216 { width: 216px; }

.fillq {
  flex: 1;
  border: 3px solid #e3e3e3;
  background: #323232;
}

.strokenone {
  flex: 1;
}

.strokenone svg {
  width: 38px;
  height: 38px;
}

.spin {
  display: flex;
  flex-direction: column;
  align-items: center;
  justify-content: space-between;
  width: 34px;
  border-right: 2px solid #3e3e3e;
}

.off {
  border-color: #363636;
  background: #323232;
}

.off .chev {
  stroke: #505050;
}

.off .arr {
  border: 0;
}

.greyfill {
  flex: 1;
  background: #686868;
}

.whitefill {
  flex: 1;
  background: #e3e3e3;
}

.brush {
  flex: 1;
  gap: 10px;
  background: #e3e3e3;
  color: #111;
}

.brushline {
  width: 104px;
  height: 4px;
  background: #000;
}

.clabel {
  flex: none;
  text-align: center;
  color: #b8b8b8;
}

.clabel.dim {
  color: #8c8c8c;
}

.clabel u {
  text-decoration: none;
  border-bottom: 2px dotted #8c8c8c;
}

.cicon {
  display: flex;
  flex: none;
  align-items: center;
  justify-content: center;
}

.cicon.end {
  justify-content: flex-end;
}

.faint svg {
  color: #555;
}

.controlbar-right {
  display: flex;
  align-items: center;
  gap: 12px;
  margin-left: auto;
}

.snap {
  width: 51px;
  height: 50px;
  border: 2px solid #3e3e3e;
  border-radius: 6px;
  background: #1e1e1e;
}

.controlbar-right .chev {
  margin-left: -8px;
}

.list {
  margin-left: 28px;
}

.body {
  display: flex;
  flex: 1;
}

.dockhead {
  height: 23px;
  padding-left: 12px;
  background: #262626;
  color: #b8b8b8;
  font-size: 25px;
  line-height: 15px;
}

.grip {
  display: block;
  width: 39px;
  height: 8px;
  background: repeating-linear-gradient(90deg, #1f1f1f 0 2px, transparent 2px 4px);
}

/* tools */
.toolbar {
  width: 148px;
  flex: none;
  border-left: 2px solid #262626;
  border-right: 6px solid #242424;
}

.toolbar .grip {
  margin: 5px 0 26px 50px;
}

.tools {
  display: grid;
  grid-template-columns: 60px 60px;
  grid-auto-rows: 48px;
  margin-left: 10px;
  padding-bottom: 5px;
  width: 120px;
  border-bottom: 2px solid #2a2a2a;
}

.tool {
  position: relative;
}

.tool svg {
  overflow: visible;
}

.tool.active {
  border: 2px solid #3e3e3e;
  border-radius: 5px;
  background: #1e1e1e;
}

.corner {
  position: absolute;
  right: 2px;
  bottom: 5px;
  border-left: 7px solid transparent;
  border-bottom: 7px solid #b8b8b8;
}

.paint {
  position: relative;
  margin: 7px 0 0 10px;
}

.paintq {
  position: absolute;
  left: 30px;
  top: 20px;
  color: #fff;
}

.trio {
  display: flex;
  width: 118px;
  height: 42px;
  margin: 8px 0 0 10px;
  border: 2px solid #3e3e3e;
  border-radius: 5px;
}

.trio button {
  flex: 1;
}

.trio button + button {
  border-left: 2px solid #3e3e3e;
}

.trio .on {
  background: #1e1e1e;
}

.trio.modes {
  height: 38px;
}

.modes svg {
  width: 22px;
  height: 22px;
}

.dimmed svg {
  color: #555;
}

.sw {
  width: 26px;
  height: 26px;
  border: 2px solid #000;
}

.green {
  background: #a5cc6b;
}

.grad {
  background: linear-gradient(90deg, #fff, #231f20);
}

.none {
  background: linear-gradient(135deg, #fff 43%, #e60c0c 43% 57%, #fff 57%);
}

.screenmode {
  display: block;
  margin: 16px 0 0 48px;
}

.dots {
  display: block;
  margin: 43px 0 0 56px;
}

/* document */
.doc {
  display: flex;
  flex: 1;
  flex-direction: column;
  min-width: 0;
}

.tabs {
  display: flex;
  height: 58px;
  background: #262626;
  border-bottom: 2px solid #222;
}

.tab {
  display: flex;
  align-items: center;
  justify-content: space-between;
  width: 514px;
  padding: 0 12px 0 20px;
  background: #323232;
  white-space: nowrap;
}

.viewport {
  display: flex;
  flex: 1;
}

.stage {
  position: relative;
  flex: 1;
  background: #383838;
  overflow: hidden;
}

.artboard {
  position: absolute;
  left: 230px;
  top: 881px;
  bottom: 0;
  width: 1547px;
  border: 2px solid #000;
  border-bottom: 0;
  background: #fff;
}

.selection {
  position: absolute;
  left: 188px;
  top: 318px;
  display: flex;
  gap: 56px;
  outline: 2px solid #5a80e0;
  outline-offset: -1px;
}

.circle {
  width: 252px;
  height: 252px;
  border-radius: 50%;
}

.handle {
  position: absolute;
  width: 12px;
  height: 12px;
  border: 2px solid #5a80e0;
  background: #fff;
}

.tl, .tc, .tr { top: -6px; }
.ml, .mr { top: calc(50% - 6px); }
.bl, .bc, .br { bottom: -6px; }
.tl, .ml, .bl { left: -6px; }
.tc, .bc { left: calc(50% - 6px); }
.tr, .mr, .br { right: -6px; }

.vscroll {
  display: flex;
  flex-direction: column;
  align-items: center;
  justify-content: space-between;
  width: 33px;
  padding: 9px 0;
  background: #2a2a2a;
}

.vscroll .thumb {
  width: 30px;
  height: 50px;
  margin-bottom: 324px;
  border-radius: 15px;
  background: #3e3e3e;
}

.vscroll .chev,
.hscroll .chev {
  stroke: #8c8c8c;
}

.status {
  display: flex;
  align-items: center;
  height: 33px;
  padding-left: 6px;
  font-size: 21px;
}

.status .combo {
  height: 33px;
  border-bottom: 0;
  border-radius: 3px;
}

.status .combo input {
  padding-top: 5px;
  line-height: 22px;
}

.zoom {
  width: 138px;
}

.page {
  width: 116px;
}

.nav {
  width: 84px;
  padding-left: 18px;
}

.nav svg {
  color: #555;
}

.mode {
  width: 400px;
  border-left: 2px solid #2a2a2a;
  text-align: center;
  color: #8c8c8c;
}

.play {
  width: 36px;
}

.hscroll {
  display: flex;
  flex: 1;
  align-items: center;
  justify-content: space-between;
  height: 33px;
  margin-right: 33px;
  padding: 0 9px;
  background: #2a2a2a;
}

.hscroll .thumb {
  width: 50px;
  height: 30px;
  border-radius: 15px;
  background: #3e3e3e;
}

/* right dock */
.dock {
  display: flex;
  flex-direction: column;
  width: 587px;
  flex: none;
  border-left: 4px solid #222;
}

.dockhead.split {
  display: flex;
  justify-content: space-between;
  padding: 0 12px 0 50px;
}

.dockcols {
  display: flex;
  flex: 1;
}

.iconcol {
  width: 81px;
  border-right: 5px solid #222;
}

.pgroup {
  display: flex;
  flex-direction: column;
  gap: 18px;
  align-items: center;
  padding-bottom: 15px;
  border-bottom: 2px solid #222;
}

.pgroup .grip {
  margin: 7px 0 -6px;
}

.pgroup svg {
  overflow: visible;
}

.props {
  flex: 1;
}

.ptabs {
  display: flex;
  height: 58px;
  background: #262626;
  border-bottom: 3px solid #222;
}

.ptabs button {
  padding: 0 18px;
  border-right: 2px solid #222;
  color: #8c8c8c;
}

.ptabs .on {
  background: #323232;
  color: #f0f0f0;
}

.taskline {
  display: flex;
  height: 2px;
  background: #1c1c1c;
}

.light {
  width: 690px;
  margin-left: 95px;
  background: #c4c4c4;
}

.mid {
  width: 80px;
  margin-left: 183px;
  background: #555;
}

/* dialog */
.dialog {
  position: absolute;
  left: 560px;
  top: 162px;
  width: 1410px;
  background: #323232;
  box-shadow: 0 0 0 2px #4a4a4a, 0 6px 18px rgba(0, 0, 0, .4);
}

.dialog h1 {
  margin: 0;
  padding-left: 14px;
  height: 56px;
  background: #fff;
  color: #999;
  font-size: 25px;
  font-weight: normal;
  line-height: 52px;
}

.dlg-cols {
  display: flex;
  gap: 21px;
  padding: 41px 49px 0 40px;
}

.dlg-main {
  width: 802px;
}

.dlg-side {
  flex: 1;
}

.harmony {
  display: flex;
  align-items: center;
  gap: 20px;
  height: 50px;
}

.base {
  width: 42px;
  height: 42px;
  border: 2px solid #000;
  background: #f5dd7a;
  box-shadow: inset 0 0 0 4px #808080, inset 0 0 0 6px #000;
}

.hcombo {
  position: relative;
  display: flex;
  align-items: center;
  justify-content: space-between;
  width: 752px;
  height: 50px;
  margin-right: -12px;
  padding-left: 6px;
  border: 2px solid #3e3e3e;
  background: #2a2a2a;
}

.harr {
  width: 36px;
  height: 46px;
  background: #3a3a3a;
}

.harmony :deep(.swatches) {
  display: flex;
}

.harmony :deep(.swatches i) {
  box-sizing: border-box;
  width: 32px;
  height: 32px;
}

.harmony :deep(.swatches i:first-child) {
  border: 2px solid #fff;
  box-shadow: inset 0 0 0 2px #000;
}

.popup {
  position: absolute;
  z-index: 2;
  top: 48px;
  left: 278px;
  width: 472px;
  padding: 10px 12px 12px;
  border: 2px solid #3e3e3e;
  background: #323232;
  box-shadow: 3px 3px 3px #1c1c1c;
}

.plist {
  display: flex;
  height: 628px;
  border: 2px solid #3e3e3e;
  border-radius: 4px;
  overflow: hidden;
}

.popup ul {
  display: flex;
  flex: 1;
  flex-direction: column;
  justify-content: flex-end;
  margin: 0;
  padding: 0;
  list-style: none;
  background: #262626;
  font-size: 21px;
}

.popup li {
  display: flex;
  flex: none;
  align-items: center;
  justify-content: space-between;
  height: 46px;
  padding: 0 5px 0 2px;
  border-bottom: 2px solid #3e3e3e;
}

.popup li:last-child {
  border-bottom: 0;
}

.popup .sel {
  background: #3a4f64;
}

.pscroll {
  display: flex;
  flex-direction: column;
  align-items: center;
  justify-content: space-between;
  width: 24px;
  padding: 4px 0;
  background: #2a2a2a;
}

.pscroll .thumb {
  width: 20px;
  height: 328px;
  margin-top: auto;
  margin-bottom: 2px;
  border-radius: 10px;
  background: #3e3e3e;
}

.pscroll .chev {
  stroke: #8c8c8c;
}

.assign {
  display: flex;
  flex-direction: column;
  height: 630px;
  margin-top: 41px;
  padding: 0 29px;
  border: 2px solid #2b2b2b;
  border-radius: 5px;
}

.edit {
  width: 150px;
  height: 38px;
  margin: -20px 0 34px 282px;
  padding-left: 20px;
  justify-content: flex-start;
  border: 2px solid #3e3e3e;
  border-radius: 5px;
  background: #323232;
}

.preset {
  display: flex;
  align-items: center;
  gap: 8px;
  color: #999;
  white-space: nowrap;
}

.preset select {
  flex: 1;
  appearance: none;
  height: 41px;
  padding-left: 12px;
  border: 2px solid #3e3e3e;
  border-radius: 5px;
  background: #2a2a2a;
  color: #dcdcdc;
}

.cur {
  margin: 38px 0 4px;
  color: #999;
  font-size: 21px;
}

.rows {
  height: 382px;
  border: 2px solid #2b2b2b;
  border-radius: 4px;
}

.row {
  display: flex;
  align-items: center;
  gap: 3px;
  height: 52px;
  padding-left: 3px;
  border-bottom: 2px solid #2b2b2b;
}

.row.on {
  background: #3a4f64;
}

.mark {
  display: flex;
  justify-content: flex-end;
  width: 24px;
  height: 36px;
}

.on .mark {
  background: #3d6488;
}

.bar {
  flex: 1;
  height: 36px;
  border: 2px solid #000;
}

.rowtools {
  display: flex;
  gap: 20px;
  margin: 27px 0 0 9px;
}

.rowtools svg {
  width: 32px;
  height: 22px;
  overflow: visible;
  fill: none;
  stroke: #555;
  stroke-width: 2;
}

.rowtools .bright svg {
  stroke: #c8c8c8;
}

.hsb {
  display: flex;
  align-items: flex-start;
  margin-top: 4px;
}

.chips {
  width: 82px;
  padding-top: 30px;
}

.chip {
  display: block;
  width: 60px;
  height: 60px;
  border: 1px solid #fff;
  background: #f5dd7a;
}

.gamut {
  display: flex;
  align-items: center;
  justify-content: space-between;
  width: 60px;
  margin-top: 28px;
  padding-left: 2px;
}

.minichip {
  width: 30px;
  height: 30px;
  border: 1px solid #fff;
  background: #ffcc66;
}

.channels {
  display: flex;
  flex-direction: column;
  gap: 25px;
  padding-top: 31px;
}

.channel {
  display: flex;
  align-items: center;
  height: 41px;
  color: #999;
  font-size: 23px;
}

.channel label {
  width: 27px;
}

.channel input[type="range"] {
  appearance: none;
  width: 179px;
  height: 25px;
  margin-top: 14px;
}

.channel input::-webkit-slider-runnable-track {
  height: 25px;
  background-repeat: no-repeat;
  background-position: 9px 0;
  background-size: calc(100% - 18px) 9px;
}

.trackH::-webkit-slider-runnable-track {
  background-image: linear-gradient(90deg, #f77, #f7f077, #77f077, #77f0f0, #7777f0, #f077f0, #f77);
}

.trackS::-webkit-slider-runnable-track {
  background-image: linear-gradient(90deg, #f5f5f5, #f5c800);
}

.trackB::-webkit-slider-runnable-track {
  background-image: linear-gradient(90deg, #000, #fde47c);
}

.channel input::-webkit-slider-thumb {
  appearance: none;
  width: 18px;
  height: 17px;
  margin-top: 8px;
  background: #b8b8b8;
  clip-path: polygon(50% 0, 100% 50%, 100% 100%, 0 100%, 0 50%);
}

.num {
  width: 99px;
  height: 41px;
  margin: 0 6px 0 7px;
  padding-left: 6px;
  border: 2px solid #3e3e3e;
  border-radius: 5px;
  background: #262626;
  color: #dcdcdc;
}

.unit {
  width: 20px;
}

.burger {
  margin: 44px 0 0 32px;
}

.limit {
  display: flex;
  flex-direction: column;
  align-items: flex-end;
  gap: 12px;
  margin-left: auto;
  color: #8c8c8c;
  font-size: 21px;
}

.limit button {
  margin-right: 10px;
}

.gname {
  display: flex;
  align-items: center;
  height: 50px;
}

.gname input {
  width: 280px;
  height: 41px;
  margin: 0 8px 4px 11px;
  padding-left: 10px;
  border: 2px solid #3e3e3e;
  border-radius: 5px;
  background: #262626;
}

.gname button {
  width: 48px;
}

.gname input + button {
  width: 44px;
  margin-right: 12px;
}

.gname svg {
  width: 30px;
  height: 30px;
}

.gname button:disabled svg {
  color: #555;
}

.glabel {
  margin: 0;
  padding: 23px 0 8px;
  color: #8c8c8c;
  font-size: 21px;
}

.groups {
  height: 826px;
  border: 2px solid #3e3e3e;
  border-radius: 5px;
}

.group {
  display: flex;
  align-items: center;
  gap: 7px;
  height: 58px;
  padding-left: 10px;
  border-bottom: 2px solid #3a3a3a;
}

.group .chev {
  margin-right: 18px;
}

.strip {
  display: flex;
  height: 34px;
  border: 2px solid #000;
}

.strip i {
  flex: 1;
}

.foot {
  display: flex;
  gap: 10px;
  margin-top: 63px;
  padding: 0 48px 39px 40px;
}

.recolor {
  display: flex;
  align-items: center;
  gap: 12px;
  height: 40px;
  margin-right: auto;
  padding-left: 2px;
}

.recolor input {
  appearance: none;
  width: 24px;
  height: 24px;
  border-radius: 3px;
  background: #999;
}

.recolor input::after {
  content: "";
  display: block;
  width: 24px;
  height: 24px;
  background: #262626;
  clip-path: polygon(12% 50%, 25% 40%, 42% 60%, 74% 18%, 87% 28%, 44% 82%);
}

.foot button {
  width: 184px;
  height: 52px;
  border: 2px solid #cfcfcf;
  border-radius: 26px;
}

.foot .ok {
  border-width: 4px;
}

.collapse {
  position: absolute;
  left: 1380px;
  top: 610px;
}

.notes {
  position: absolute;
  z-index: 3;
  left: 0;
  top: 0;
  overflow: visible;
  pointer-events: none;
}

.pen {
  fill: #ff5500;
  font-weight: bold;
}
</style>
